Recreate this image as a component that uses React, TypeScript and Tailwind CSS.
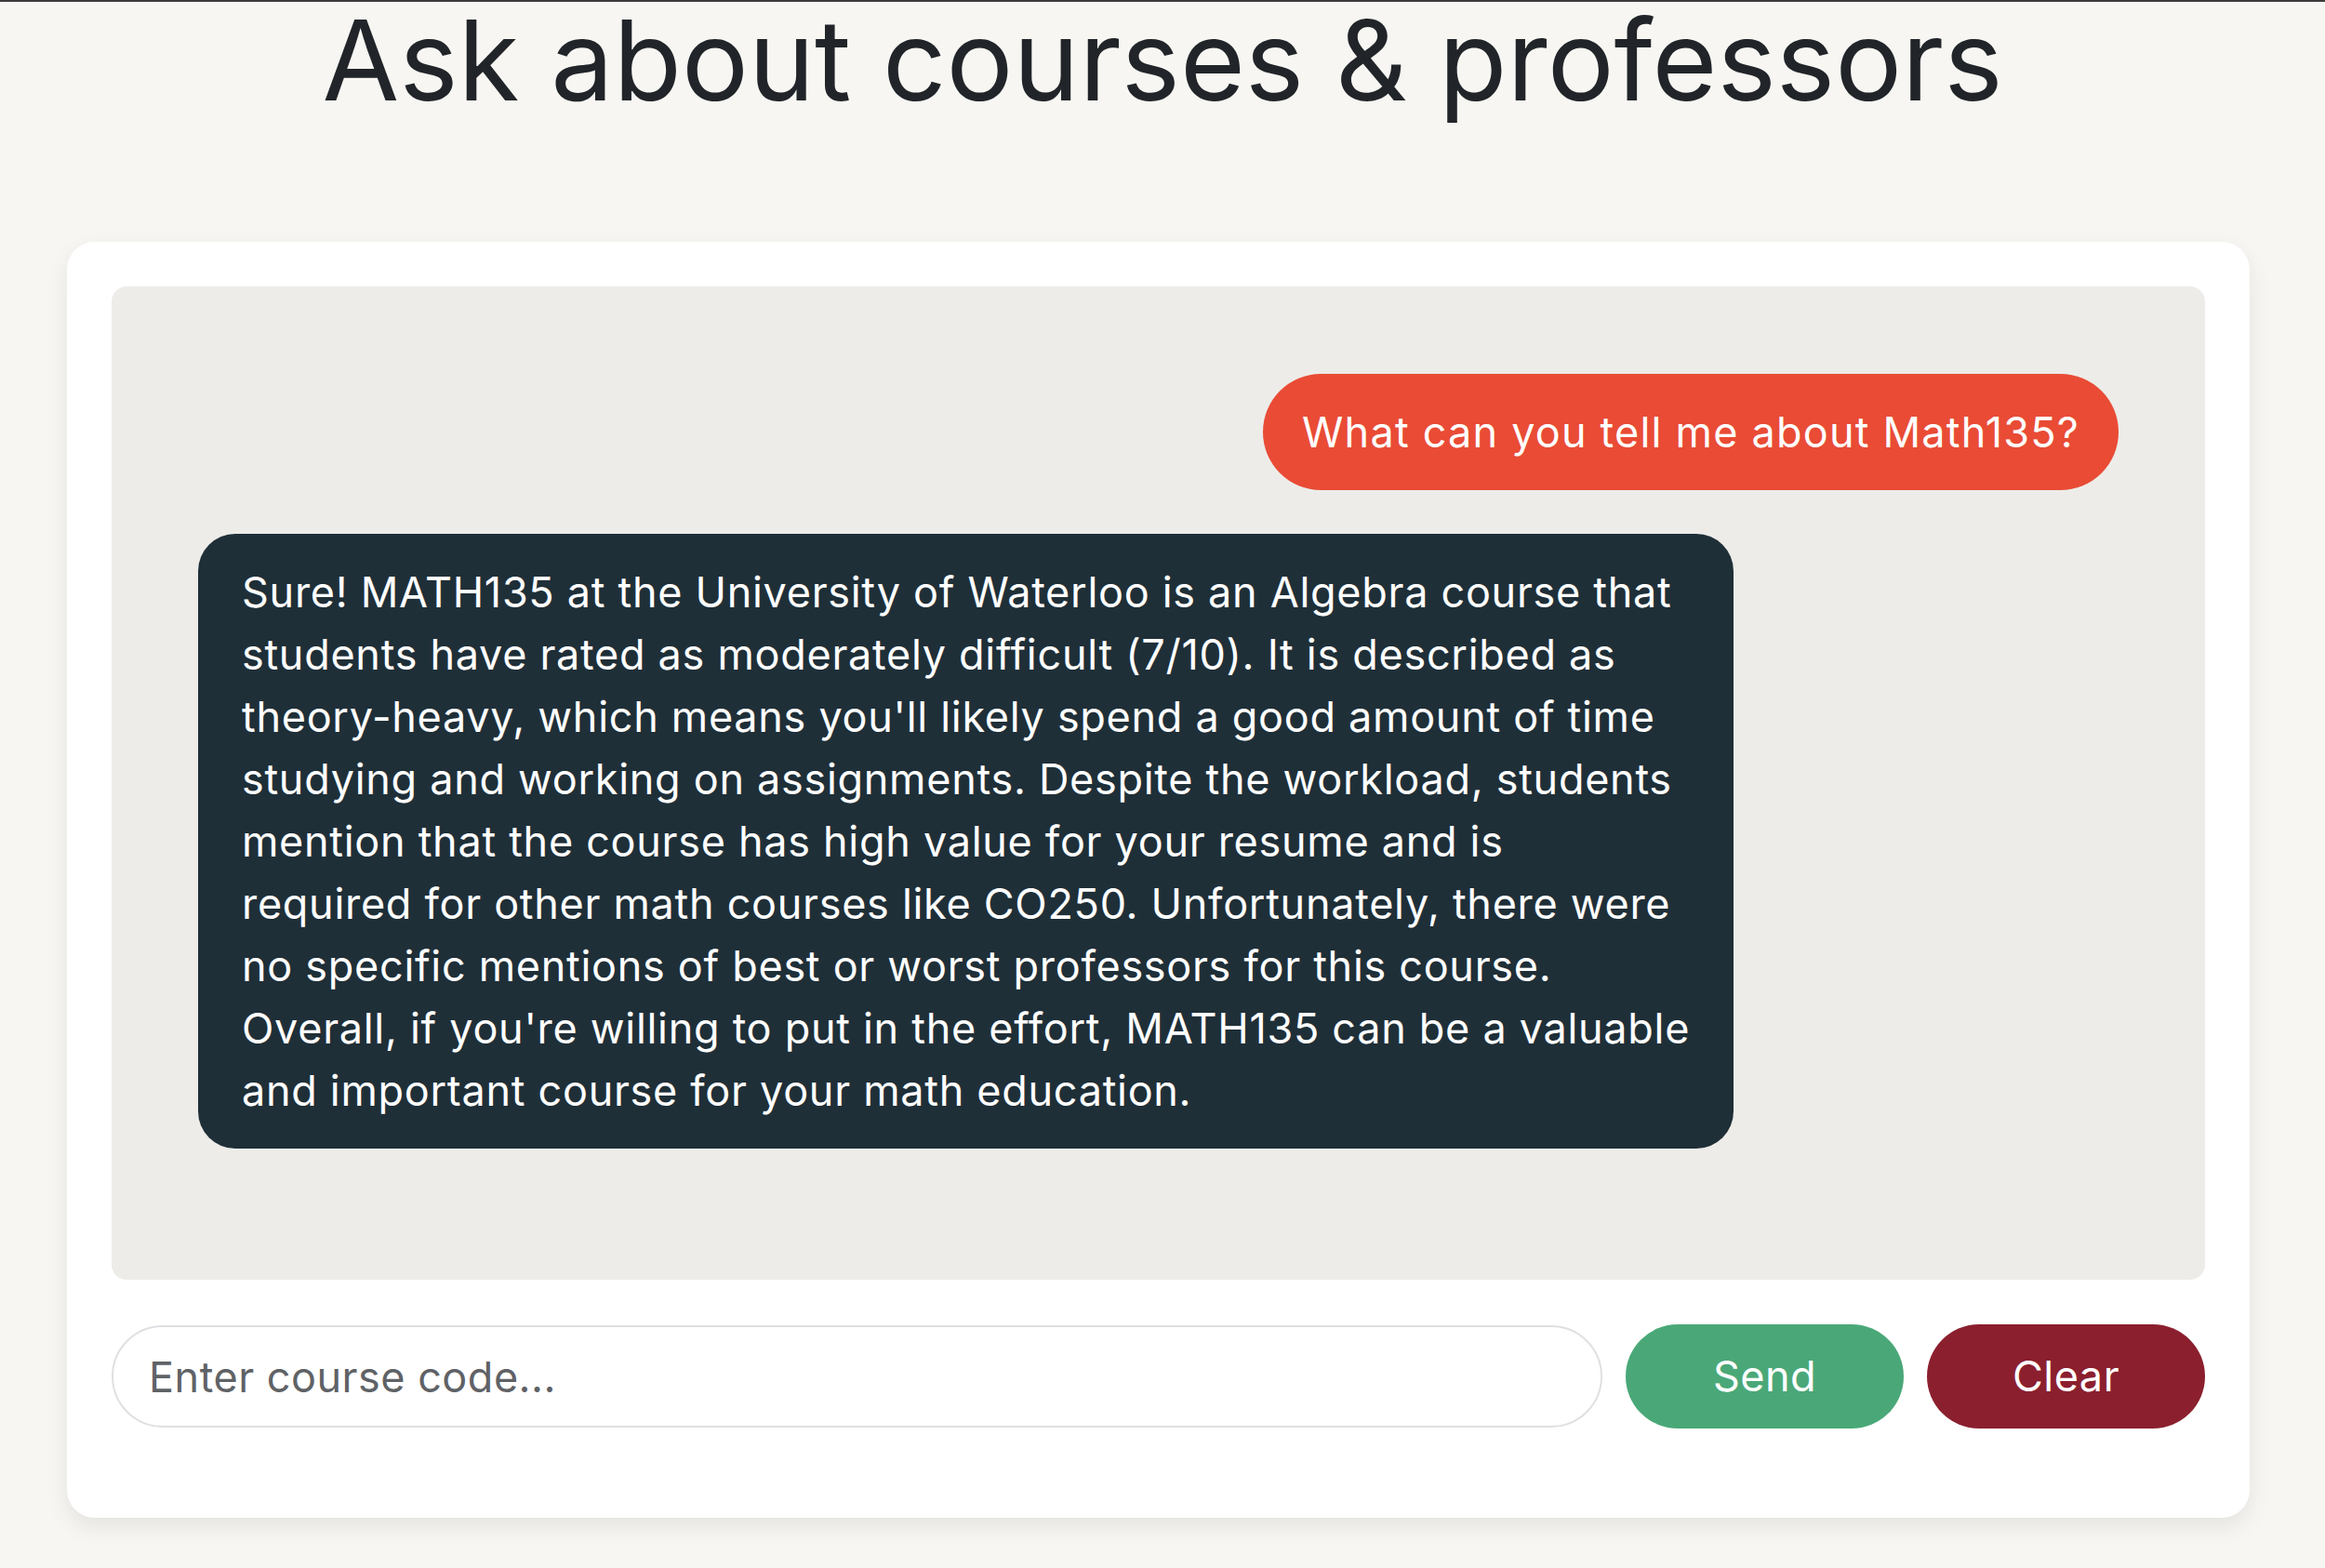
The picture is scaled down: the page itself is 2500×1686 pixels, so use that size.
import React from "react"

const botLines = [
  "Sure! MATH135 at the University of Waterloo is an Algebra course that",
  "students have rated as moderately difficult (7/10). It is described as",
  "theory-heavy, which means you'll likely spend a good amount of time",
  "studying and working on assignments. Despite the workload, students",
  "mention that the course has high value for your resume and is",
  "required for other math courses like CO250. Unfortunately, there were",
  "no specific mentions of best or worst professors for this course.",
  "Overall, if you're willing to put in the effort, MATH135 can be a valuable",
  "and important course for your math education.",
]

export default function App() {
  return (
    <div className="min-h-[1686px] border-t-2 border-[#3c3c3c] bg-[#f7f6f2] font-['Inter','Noto_Sans',sans-serif] text-[#212529]">
      <h1 className="text-center text-[120px] leading-[125px] font-normal">
        Ask about courses &amp; professors
      </h1>

      <div className="mx-[72px] mt-[133px] w-[2347px] rounded-[30px] bg-white px-[48px] pt-[48px] pb-[96px] shadow-[0_10px_24px_rgba(0,0,0,0.08)]">
        <div className="flex h-[1068px] flex-col gap-[47px] rounded-[16px] bg-[#edece8] px-[93px] pt-[94px]">
          <div className="self-end rounded-full bg-[#e94b35] px-[42px] py-[29px] text-[45px] leading-[67px] tracking-[1.2px] text-white">
            What can you tell me about Math135?
          </div>
          <div className="w-[1651px] self-start rounded-[40px] bg-[#1f2f38] px-[47px] py-[29px] text-[45px] leading-[67px] tracking-[0.7px] text-white">
            {botLines.map((line) => (
              <div key={line} className="whitespace-nowrap">
                {line}
              </div>
            ))}
          </div>
        </div>

        <div className="mt-[48px] flex items-center gap-[25px]">
          <input
            type="text"
            placeholder="Enter course code..."
            className="h-[110px] flex-1 rounded-full border-2 border-[#dfe0e3] bg-white pl-[38px] text-[45px] tracking-[0.5px] text-[#212529] outline-none placeholder:text-[#5f6266]"
          />
          <button className="h-[112px] w-[299px] rounded-full bg-[#4aa878] text-[45px] tracking-[0.5px] text-white">
            Send
          </button>
          <button className="h-[112px] w-[299px] rounded-full bg-[#8b1f2e] text-[45px] tracking-[0.5px] text-white">
            Clear
          </button>
        </div>
      </div>
    </div>
  )
}
